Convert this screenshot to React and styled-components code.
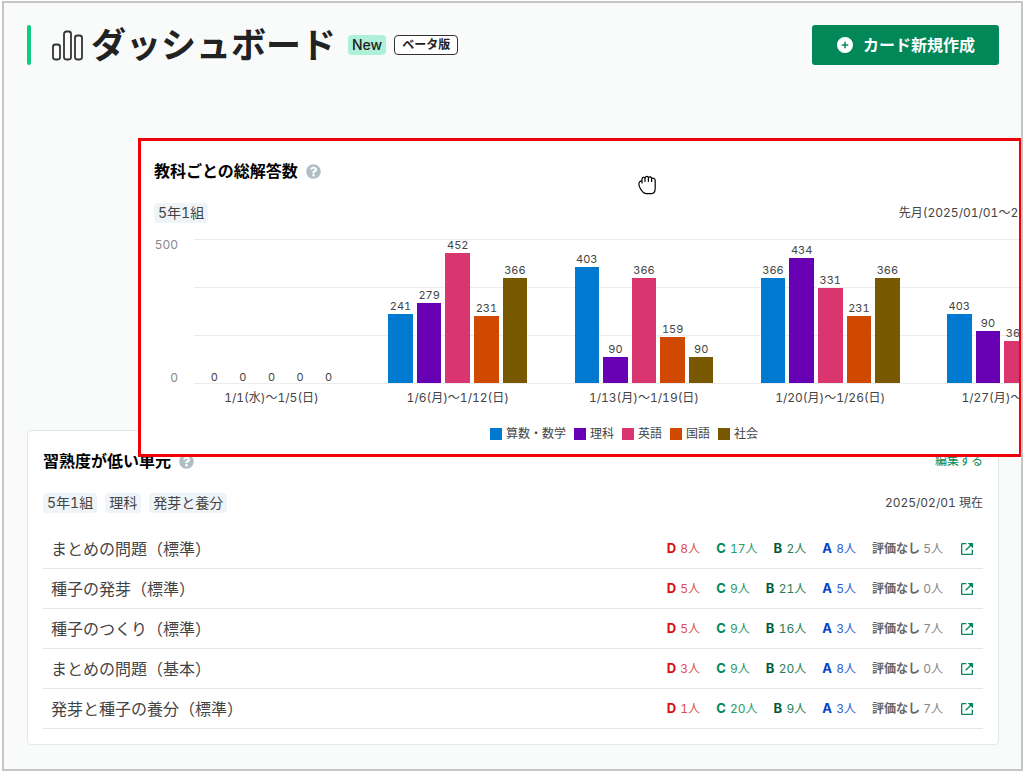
import React from "react";
import styled, { createGlobalStyle } from "styled-components";
import { FaQuestionCircle } from "react-icons/fa";
import { FaCirclePlus } from "react-icons/fa6";
import { BiLinkExternal } from "react-icons/bi";

const GlobalStyle = createGlobalStyle`
  * {
    box-sizing: border-box;
  }

  body {
    margin: 0;
    background: #ffffff;
    color: #444444;
    font-family: Inter, "Noto Sans CJK JP", sans-serif;
    font-size: 12px;
    line-height: 16px;
    font-variant-numeric: tabular-nums;
  }
`;

const Page = styled.main`
  margin: 1px 1px 1px 2px;
  padding: 22px 22px 24px 23px;
  border: 2px solid #c6c6c6;
  background: #f9fbfb;
  overflow: hidden;
`;

const Header = styled.header`
  display: flex;
  align-items: center;
  justify-content: space-between;
`;

const Heading = styled.div`
  display: flex;
  align-items: center;
  gap: 8px;
  height: 40px;
  padding-left: 24px;
  position: relative;

  &::before {
    content: "";
    position: absolute;
    left: 0;
    top: 0;
    width: 4px;
    height: 100%;
    border-radius: 2px;
    background: #0fca80;
  }
`;

const Title = styled.h1`
  margin: 0;
  color: #222222;
  font-size: 35px;
  line-height: 40px;
  font-weight: 700;
`;

const Badges = styled.div`
  display: flex;
  align-items: center;
  gap: 8px;
  margin-left: 4px;
`;

const NewBadge = styled.span`
  padding: 0 4px;
  border-radius: 4px;
  background: #aef0d8;
  color: #222222;
  font-size: 14px;
  line-height: 20px;
  font-weight: 500;
`;

const BetaBadge = styled.span`
  padding: 0 7px;
  border: 1px solid #333333;
  border-radius: 4px;
  background: #ffffff;
  color: #222222;
  line-height: 18px;
  font-weight: 700;
`;

const CreateButton = styled.button`
  display: flex;
  align-items: center;
  gap: 10px;
  height: 40px;
  padding: 0 24px 0 25px;
  border: 0;
  border-radius: 3px;
  background: #028758;
  color: #ffffff;
  font: inherit;
  font-size: 16px;
  font-weight: 700;
  cursor: pointer;
`;

/* The empty place that the dragged card leaves behind */
const DragSlot = styled.div`
  position: relative;
  z-index: 1;
  min-height: 316px;
  margin: 33px 0 16px;
`;

const DraggedCard = styled.section`
  position: absolute;
  top: 40px;
  left: 111px;
  right: -23px;
  padding: 18px 0 12px 13px;
  border: 3px solid #f00008;
  background: #ffffff;
  overflow: hidden;
`;

const ChartBody = styled.div`
  width: calc(100vw - 84px);
`;

const GrabIcon = styled.svg`
  position: absolute;
  top: 34px;
  left: 497px;
`;

const Card = styled.section`
  padding: 18px 15px 15px;
  border: 1px solid #e2e8e8;
  border-radius: 4px;
  background: #ffffff;
`;

const CardHeader = styled.div`
  display: flex;
  align-items: center;
  justify-content: space-between;
  height: 24px;
`;

const CardTitle = styled.h2`
  display: flex;
  align-items: center;
  gap: 8px;
  margin: 0;
  color: #000000;
  font-size: 16px;
  line-height: 24px;
  font-weight: 700;
`;

const HelpButton = styled.button`
  display: flex;
  padding: 0;
  border: 0;
  background: none;
  color: #b0bec5;
  cursor: pointer;
`;

const EditLink = styled.a`
  color: #028758;
  text-decoration: none;
`;

const Conditions = styled.div`
  display: flex;
  align-items: center;
  justify-content: space-between;
  margin: 20px 0 16px;
`;

const Period = styled.span`
  padding-right: ${(props) => (props.$inset ? "8px" : "0")};
`;

const Tags = styled.div`
  display: flex;
  gap: 8px;
`;

const Tag = styled.span`
  padding: 0 4px;
  border-radius: 4px;
  background: #eff4f8;
  font-size: 14px;
  line-height: 20px;
`;

const Chart = styled.div`
  display: grid;
  grid-template-columns: 24px 1fr;
  column-gap: 16px;
  row-gap: 6px;
`;

const Axis = styled.div`
  display: flex;
  flex-direction: column;
  justify-content: space-between;
  color: #888888;
  line-height: 12px;
  text-align: right;
`;

const Plot = styled.div`
  display: flex;
  align-items: flex-end;
  justify-content: space-between;
  height: 145px;
  padding: 0 8px 1px;
  background: repeating-linear-gradient(#ececec 0 1px, transparent 1px 48px);
`;

const BarGroup = styled.div`
  display: flex;
  align-items: flex-end;
  gap: 4px;
  width: 139px;
`;

const BarColumn = styled.div`
  flex: 1;
  display: flex;
  flex-direction: column;
  align-items: center;
`;

const BarValue = styled.span`
  margin-bottom: ${(props) => (props.$raised ? "2px" : "0")};
  font-size: 11px;
  line-height: 12px;
`;

const Bar = styled.div`
  width: 100%;
  background: ${(props) => props.$color};
`;

const WeekLabels = styled.div`
  grid-column: 2;
  display: flex;
  justify-content: space-between;
  padding: 0 8px;
`;

const WeekLabel = styled.span`
  width: 139px;
  text-align: center;
  white-space: nowrap;
`;

const Legend = styled.ul`
  display: flex;
  justify-content: center;
  gap: 8px;
  margin: 20px 0 0;
  padding: 0;
  list-style: none;
`;

const LegendItem = styled.li`
  display: flex;
  align-items: center;
  gap: 4px;

  &::before {
    content: "";
    width: 12px;
    height: 12px;
    background: ${(props) => props.$color};
  }
`;

const UnitTable = styled.table`
  width: 100%;
  border-collapse: separate;
  border-spacing: 0;
`;

const UnitCell = styled.td`
  height: 40px;
  padding: 0 8px;
  border-bottom: 1px solid #e2e8e8;
  font-size: 16px;
`;

const Counts = styled.div`
  display: flex;
  align-items: center;
  justify-content: flex-end;
  gap: 16px;
  font-size: 12px;
`;

const Count = styled.span`
  color: ${(props) => props.$color};
  white-space: nowrap;

  b {
    margin-right: ${(props) => (props.$letter ? "1px" : "0")};
    color: ${(props) => props.$strong};
    font-size: ${(props) => (props.$letter ? "13px" : "12px")};
    font-weight: 700;
  }
`;

const OpenLink = styled.a`
  display: flex;
  color: #028758;
`;

const subjects = [
  { name: "算数・数学", color: "#0079d0" },
  { name: "理科", color: "#6800b4" },
  { name: "英語", color: "#d9366f" },
  { name: "国語", color: "#d14900" },
  { name: "社会", color: "#785900" },
];

const AXIS_MAX = 500;
const PLOT_HEIGHT = 144;

const weeks = [
  { label: "1/1(水)〜1/5(日)", values: [0, 0, 0, 0, 0] },
  { label: "1/6(月)〜1/12(日)", values: [241, 279, 452, 231, 366] },
  { label: "1/13(月)〜1/19(日)", values: [403, 90, 366, 159, 90] },
  { label: "1/20(月)〜1/26(日)", values: [366, 434, 331, 231, 366] },
  {
    label: "1/27(月)〜1/31(金)",
    values: [403, 90, 366, 159, 90],
    levels: [241, 181, 147, 120, 90],
  },
];

const grades = {
  D: { color: "#e05050", strong: "#d80f0f" },
  C: { color: "#2a9a70", strong: "#028758" },
  B: { color: "#2a8058", strong: "#005c38" },
  A: { color: "#2f62da", strong: "#0a3ecb" },
  評価なし: { color: "#888888", strong: "#666666" },
};

const units = [
  { name: "まとめの問題（標準）", counts: [8, 17, 2, 8, 5] },
  { name: "種子の発芽（標準）", counts: [5, 9, 21, 5, 0] },
  { name: "種子のつくり（標準）", counts: [5, 9, 16, 3, 7] },
  { name: "まとめの問題（基本）", counts: [3, 9, 20, 8, 0] },
  { name: "発芽と種子の養分（標準）", counts: [1, 20, 9, 3, 7] },
];

function ChartIcon() {
  return (
    <svg
      width="32"
      height="32"
      viewBox="0 0 32 32"
      fill="none"
      stroke="#333333"
      strokeWidth="1.8"
      aria-hidden="true"
    >
      <rect x="2" y="15.500" width="7" height="15" rx="2.400" />
      <rect x="13" y="2.500" width="7" height="28" rx="2.400" />
      <rect x="24" y="6.500" width="7" height="24" rx="2.400" />
    </svg>
  );
}

function GrabCursor() {
  return (
    <GrabIcon
      width="19"
      height="20"
      viewBox="0 0 19 20"
      fill="#ffffff"
      stroke="#000000"
      strokeWidth="1.2"
      strokeLinecap="round"
      strokeLinejoin="round"
      aria-hidden="true"
    >
      <path d="M4 8V4.200C4 2 6.200 1.800 7 3C7.200 .800 10 .800 10.400 2.600C11.400 1.200 13.400 1.800 13.600 3.500C15.200 2.600 17.200 3.500 17.200 5.500V13C17.200 15.500 16.500 18.600 13.500 18.600H8C4.500 18.600 4 15.600 2.400 13.600C1.200 12 .800 10.500 .900 8.800C1 6.800 2.600 5.600 4 5.800" />
      <path d="M7 3V6.500M10.400 2.600V6.500M13.600 3.500V6.500" fill="none" />
    </GrabIcon>
  );
}

function Help() {
  return (
    <HelpButton type="button" aria-label="ヘルプ">
      <FaQuestionCircle size="15" />
    </HelpButton>
  );
}

function AnswersChart() {
  return (
    <Chart>
      <Axis>
        <span>{AXIS_MAX}</span>
        <span>0</span>
      </Axis>
      <Plot>
        {weeks.map((week) => (
          <BarGroup key={week.label}>
            {week.values.map((value, index) => {
              const level = week.levels ? week.levels[index] : value;
              const height = Math.round((level / AXIS_MAX) * PLOT_HEIGHT);

              return (
                <BarColumn key={subjects[index].name}>
                  <BarValue $raised={value > 0}>{value}</BarValue>
                  <Bar $color={subjects[index].color} style={{ height }} />
                </BarColumn>
              );
            })}
          </BarGroup>
        ))}
      </Plot>
      <WeekLabels>
        {weeks.map((week) => (
          <WeekLabel key={week.label}>{week.label}</WeekLabel>
        ))}
      </WeekLabels>
    </Chart>
  );
}

function UnitRow({ unit }) {
  return (
    <tr>
      <UnitCell>{unit.name}</UnitCell>
      <UnitCell>
        <Counts>
          {Object.keys(grades).map((grade, index) => (
            <Count
              key={grade}
              $color={grades[grade].color}
              $strong={grades[grade].strong}
              $letter={grade.length === 1}
            >
              <b>{grade}</b> {unit.counts[index]}人
            </Count>
          ))}
          <OpenLink href="#unit" aria-label={`${unit.name}を開く`}>
            <BiLinkExternal size="16" />
          </OpenLink>
        </Counts>
      </UnitCell>
    </tr>
  );
}

export default function App() {
  return (
    <>
      <GlobalStyle />
      <Page lang="ja">
        <Header>
          <Heading>
            <ChartIcon />
            <Title>ダッシュボード</Title>
            <Badges>
              <NewBadge>New</NewBadge>
              <BetaBadge>ベータ版</BetaBadge>
            </Badges>
          </Heading>
          <CreateButton type="button">
            <FaCirclePlus size="16" />
            カード新規作成
          </CreateButton>
        </Header>

        <DragSlot>
          <DraggedCard>
            <ChartBody>
              <CardHeader>
                <CardTitle>
                  教科ごとの総解答数
                  <Help />
                </CardTitle>
              </CardHeader>
              <Conditions>
                <Tags>
                  <Tag>5年1組</Tag>
                </Tags>
                <Period $inset>先月(2025/01/01〜2025/01/31)</Period>
              </Conditions>
              <AnswersChart />
              <Legend>
                {subjects.map((subject) => (
                  <LegendItem key={subject.name} $color={subject.color}>
                    {subject.name}
                  </LegendItem>
                ))}
              </Legend>
            </ChartBody>
            <GrabCursor />
          </DraggedCard>
        </DragSlot>

        <Card>
          <CardHeader>
            <CardTitle>
              習熟度が低い単元
              <Help />
            </CardTitle>
            <EditLink href="#edit">編集する</EditLink>
          </CardHeader>
          <Conditions>
            <Tags>
              <Tag>5年1組</Tag>
              <Tag>理科</Tag>
              <Tag>発芽と養分</Tag>
            </Tags>
            <Period>2025/02/01 現在</Period>
          </Conditions>
          <UnitTable>
            <tbody>
              {units.map((unit) => (
                <UnitRow key={unit.name} unit={unit} />
              ))}
            </tbody>
          </UnitTable>
        </Card>
      </Page>
    </>
  );
}
